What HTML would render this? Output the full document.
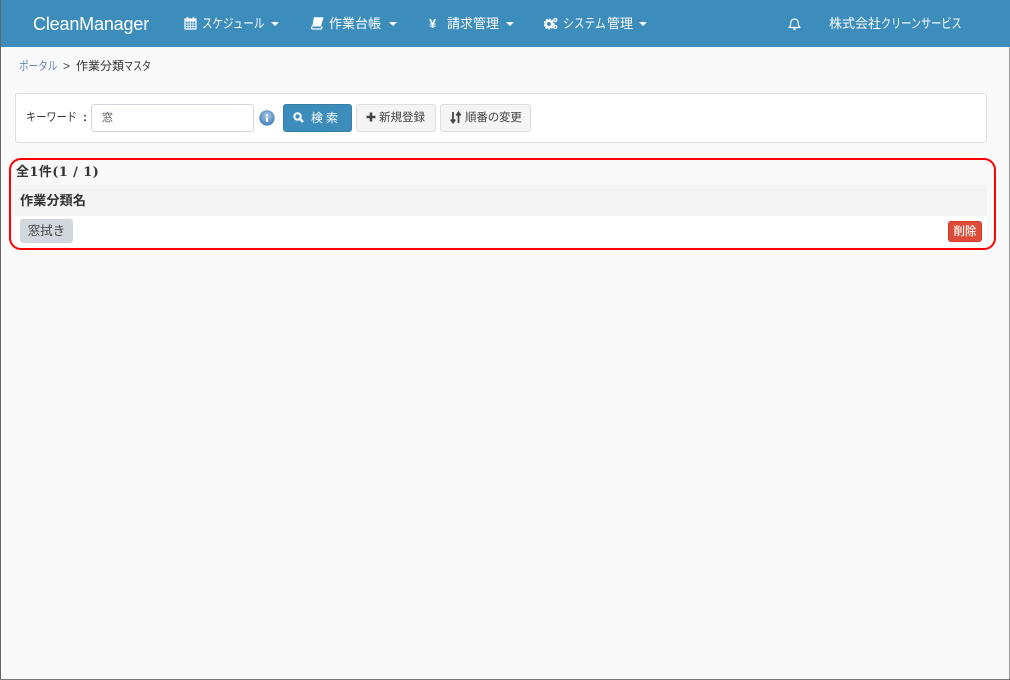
<!DOCTYPE html>
<html lang="ja">
<head>
<meta charset="utf-8">
<title>作業分類マスタ</title>
<style>
html,body{margin:0;padding:0}
body{width:1010px;height:680px;position:relative;overflow:hidden;background:#f9f9f9;font-family:"Liberation Sans","Noto Sans CJK JP",sans-serif;font-size:12px;color:#333}
.a{position:absolute;white-space:nowrap}
.nav{left:0;top:0;width:1010px;height:47px;background:#3c8dbc}
.n{color:#fff;font-size:13px;line-height:18px;top:15px}
.s{transform-origin:0 50%}
.caret{position:absolute;top:22px;width:0;height:0;border-left:4px solid transparent;border-right:4px solid transparent;border-top:4px solid #fff}
svg{position:absolute;display:block}
.btn{border-radius:3px;box-sizing:border-box;border:1px solid #ddd;background:#f4f4f4;height:28px;top:104px;font-size:11.5px;line-height:26px;color:#444}
</style>
</head>
<body>
<div class="a nav"></div>
<div class="a" style="left:33px;top:12px;font-size:18px;line-height:24px;color:#fff;letter-spacing:-.17px">CleanManager</div>

<svg style="left:184px;top:16px" width="13" height="14" viewBox="0 0 13 14"><path d="M1 3h11v10H1z" fill="none" stroke="#fff" stroke-width="1.2"/><path d="M1 3h11v2.500H1z" fill="#fff"/><path d="M3.500 1v3M9.500 1v3" stroke="#fff" stroke-width="1.500"/><path d="M1 8h11M1 10.500h11M4 5v8M6.500 5v8M9 5v8" stroke="#fff" stroke-width=".8"/></svg>
<div class="a n s" style="left:202px;transform:scaleX(.81)">スケジュール</div>
<div class="caret" style="left:271px"></div>

<svg style="left:310px;top:16px" width="14" height="14" viewBox="0 0 14 14"><path d="M4 1.200h9.500l-2.500 9.300H2.200z" fill="#fff"/><path d="M2.200 10.500C.8 12.300 1.800 13 3 13h8.200l.8-2.500" fill="none" stroke="#fff" stroke-width="1.300"/></svg>
<div class="a n" style="left:329px">作業台帳</div>
<div class="caret" style="left:389px"></div>

<div class="a" style="left:429px;top:15px;font-size:13px;line-height:18px;font-weight:700;color:#fff">¥</div>
<div class="a n" style="left:447px">請求管理</div>
<div class="caret" style="left:506px"></div>

<svg style="left:544px;top:17px" width="14" height="13" viewBox="0 0 14 13"><circle cx="5" cy="7" r="3.200" fill="none" stroke="#fff" stroke-width="2.400"/><circle cx="5" cy="7" r="4.800" fill="none" stroke="#fff" stroke-width="1.400" stroke-dasharray="1.800 1.400"/><circle cx="11.300" cy="3" r="1.500" fill="none" stroke="#fff" stroke-width="1.300"/><circle cx="11.300" cy="10" r="1.500" fill="none" stroke="#fff" stroke-width="1.300"/></svg>
<div class="a n s" style="left:563px;transform:scaleX(.83)">システム</div>
<div class="a n" style="left:607px">管理</div>
<div class="caret" style="left:639px"></div>

<svg style="left:788px;top:17px" width="13" height="14" viewBox="0 0 13 14"><path d="M1 10.500c1.300-1 1.700-2.300 1.700-4.500 0-2.300 1.600-4 3.800-4s3.800 1.700 3.800 4c0 2.200.4 3.500 1.700 4.500z" fill="none" stroke="#fff" stroke-width="1.200" stroke-linejoin="round"/><path d="M5 11.500a1.500 1.500 0 0 0 3 0z" fill="#fff"/></svg>
<div class="a n" style="left:829px">株式会社</div>
<div class="a n s" style="left:881px;transform:scaleX(.78)">クリーンサービス</div>

<div class="a s" style="left:19px;top:58px;line-height:17px;color:#6f86b3;transform:scaleX(.8)">ポータル</div>
<div class="a" style="left:63px;top:58px;line-height:17px;color:#444">&gt;</div>
<div class="a" style="left:76px;top:58px;line-height:17px;color:#333">作業分類</div>
<div class="a s" style="left:124px;top:58px;line-height:17px;color:#333;transform:scaleX(.75)">マスタ</div>

<div class="a" style="left:15px;top:93px;width:972px;height:50px;box-sizing:border-box;background:#fff;border:1px solid #ddd;border-radius:3px"></div>
<div class="a s" style="left:26px;top:108px;line-height:18px;color:#333;transform:scaleX(.85)">キーワード</div>
<div class="a" style="left:83px;top:108px;line-height:18px;color:#333;font-weight:700">:</div>
<div class="a" style="left:91px;top:104px;width:163px;height:28px;box-sizing:border-box;background:#fff;border:1px solid #d2d6de;border-radius:3px;padding-left:10px;line-height:27px;font-size:11px;color:#555">窓</div>

<svg style="left:259px;top:110px" width="16" height="16" viewBox="0 0 16 16"><defs><radialGradient id="g" cx=".5" cy=".35" r=".7"><stop offset="0" stop-color="#a8cdec"/><stop offset="1" stop-color="#3a78b5"/></radialGradient></defs><circle cx="8" cy="8" r="7.300" fill="url(#g)" stroke="#5b8fbf" stroke-width=".8"/><rect x="7" y="7" width="2" height="5" fill="#fff"/><rect x="7" y="4" width="2" height="2" fill="#fff"/></svg>

<div class="a" style="left:283px;top:104px;width:69px;height:28px;background:#3c8dbc;border:1px solid #367fa9;box-sizing:border-box;border-radius:3px"></div>
<svg style="left:293px;top:112px" width="11" height="11" viewBox="0 0 11 11"><circle cx="4.500" cy="4.500" r="3.200" fill="none" stroke="#fff" stroke-width="2"/><path d="M7 7l3 3" stroke="#fff" stroke-width="2.400"/></svg>
<div class="a" style="left:311px;top:109px;line-height:18px;color:#fff;letter-spacing:3px">検索</div>

<div class="a btn" style="left:356px;width:80px"></div>
<svg style="left:366px;top:112px" width="10" height="10" viewBox="0 0 10 10"><path d="M5 .5v9M.5 5h9" stroke="#444" stroke-width="2.600"/></svg>
<div class="a" style="left:379px;top:109px;font-size:11.500px;line-height:18px;color:#444">新規登録</div>

<div class="a btn" style="left:440px;width:91px"></div>
<svg style="left:450px;top:111px" width="12" height="13" viewBox="0 0 12 13"><path d="M3 1v10M.8 8.500L3 11.500l2.200-3M8.500 12V2M6.300 4.500L8.500 1.500l2.200 3" fill="none" stroke="#444" stroke-width="1.800"/></svg>
<div class="a" style="left:465px;top:109px;font-size:11.500px;line-height:18px;color:#444;letter-spacing:-.15px">順番の変更</div>

<div class="a" style="left:16px;top:164px;font-size:13px;line-height:18px;font-weight:700;color:#333;letter-spacing:.4px;font-family:'DejaVu Serif','Noto Sans CJK JP',serif">全1件(1 / 1)</div>

<div class="a" style="left:15px;top:185px;width:972px;height:31px;background:#f3f3f3"></div>
<div class="a" style="left:20px;top:192px;font-size:13.200px;line-height:18px;font-weight:700;color:#333">作業分類名</div>

<div class="a" style="left:15px;top:216px;width:972px;height:30px;background:#fff"></div>
<div class="a" style="left:20px;top:219px;width:53px;height:24px;background:#d2d6de;border-radius:3px;text-align:center;font-size:12.500px;line-height:25px;color:#444">窓拭き</div>
<div class="a" style="left:948px;top:221px;width:34px;height:21px;background:#dd4b39;border:1px solid #d73925;box-sizing:border-box;border-radius:3px;text-align:center;font-size:11.500px;line-height:20px;color:#fff;font-weight:500">削除</div>

<div class="a" style="left:9px;top:158px;width:987px;height:92px;box-sizing:border-box;border:2px solid #f00;border-radius:12px"></div>

<div class="a" style="left:0;top:0;width:1px;height:680px;background:#666"></div>
<div class="a" style="left:1009px;top:47px;width:1px;height:633px;background:#999"></div>
<div class="a" style="left:0;top:679px;width:1010px;height:1px;background:#777"></div>
</body>
</html>
